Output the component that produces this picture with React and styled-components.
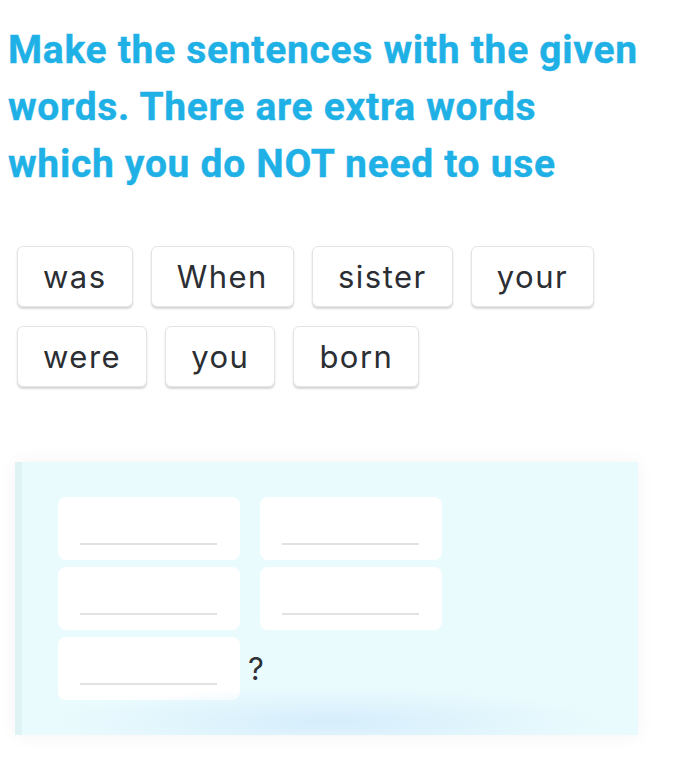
import React from "react";
import styled, { createGlobalStyle } from "styled-components";

const Global = createGlobalStyle`
  html, body { margin: 0; padding: 0; background: #ffffff; }
  body { font-family: Inter, "Noto Sans", sans-serif; }
`;

const Page = styled.div`
  width: 687px;
  min-height: 761px;
  box-sizing: border-box;
  padding: 22px 0 0 0;
  display: flex;
  flex-direction: column;
`;

const Title = styled.h1`
  margin: 0 0 0 8px;
  font-family: Roboto, "Noto Sans", sans-serif;
  font-weight: 700;
  font-size: 39px;
  line-height: 57px;
  letter-spacing: 0.7px;
  color: #1fb1e6;
  -webkit-text-stroke: 0.4px #1fb1e6;
`;

const Bank = styled.div`
  display: flex;
  flex-wrap: wrap;
  gap: 19px 18px;
  margin: 53px 0 0 17px;
  width: 600px;
`;

const Chip = styled.div`
  height: 61px;
  box-sizing: border-box;
  padding: 0 25px;
  display: flex;
  align-items: center;
  justify-content: center;
  background: #ffffff;
  border: 1px solid #e4e4e4;
  border-radius: 6px;
  box-shadow: 0 2px 2px rgba(0, 0, 0, 0.16);
  font-family: Inter, "Noto Sans", sans-serif;
  font-size: 31px;
  letter-spacing: 1.5px;
  font-weight: 400;
  color: #2b2e33;
`;

const Panel = styled.div`
  position: relative;
  margin: 75px 0 0 15px;
  width: 623px;
  height: 273px;
  box-sizing: border-box;
  padding: 35px 0 0 36px;
  background: #eafbfd;
  border-left: 7px solid #dff2f4;
  box-shadow: 0 0 18px rgba(0, 0, 0, 0.05);
  overflow: hidden;

  &::after {
    content: "";
    position: absolute;
    left: 30px;
    right: 30px;
    bottom: -22px;
    height: 70px;
    background: radial-gradient(ellipse at center, rgba(212, 236, 252, 0.95) 0%, rgba(214, 236, 252, 0) 70%);
    pointer-events: none;
  }
`;

const Slots = styled.div`
  display: grid;
  grid-template-columns: 182px 182px;
  column-gap: 20px;
  row-gap: 7px;
  align-items: center;
`;

const Slot = styled.div`
  width: 182px;
  height: 63px;
  flex: none;
  box-sizing: border-box;
  background: #ffffff;
  border-radius: 8px;
  padding: 0 23px 15px 22px;
  display: flex;
  align-items: flex-end;
`;

const Line = styled.div`
  height: 2px;
  width: 100%;
  background: #e2e2e2;
`;

const LastRow = styled.div`
  grid-column: 1 / span 2;
  display: flex;
  align-items: center;
  gap: 8px;
`;

const Mark = styled.span`
  font-family: Inter, "Noto Sans", sans-serif;
  font-size: 31px;
  color: #2e3136;
  line-height: 1;
`;

const words = ["was", "When", "sister", "your", "were", "you", "born"];

export default function App() {
  return (
    <Page>
      <Global />
      <Title>
        Make the sentences with the given
        <br />
        words. There are extra words
        <br />
        which you do NOT need to use
      </Title>
      <Bank>
        {words.map((w) => (
          <Chip key={w}>{w}</Chip>
        ))}
      </Bank>
      <Panel>
        <Slots>
          <Slot><Line /></Slot>
          <Slot><Line /></Slot>
          <Slot><Line /></Slot>
          <Slot><Line /></Slot>
          <LastRow>
            <Slot><Line /></Slot>
            <Mark>?</Mark>
          </LastRow>
        </Slots>
      </Panel>
    </Page>
  );
}
